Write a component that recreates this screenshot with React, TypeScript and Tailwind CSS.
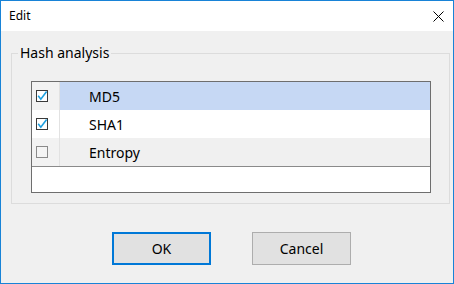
import React from "react";

const items = [
    { name: "MD5", checked: true, selected: true },
    { name: "SHA1", checked: true, selected: false },
    { name: "Entropy", checked: false, selected: false },
];

const CheckBox = ({ checked }: { checked: boolean }) => (
    <svg width="13" height="13" viewBox="0 0 13 13">
        <rect x="0.5" y="0.5" width="11" height="11" fill={checked ? "#ffffff" : "#f4f4f4"} stroke={checked ? "#3a3a3a" : "#8a8a8a"} />
        {checked && (
            <polyline points="2.2,5.8 4.8,9.2 10.6,1.6" fill="none" stroke="#1ea0e0" strokeWidth="1.6" />
        )}
    </svg>
);

const App = () => {
    return (
        <div
            className="w-[454px] h-[284px] flex flex-col border border-[#1883d7] bg-[#f0f0f0] text-black"
            style={{ fontFamily: '"Noto Sans", "DejaVu Sans", sans-serif' }}
        >
            {/* title bar */}
            <div className="h-[30px] bg-white flex items-center justify-between pl-[8px] pr-[9px]">
                <span className="text-[12px] leading-none">Edit</span>
                <svg width="11" height="11" viewBox="0 0 11 11">
                    <path d="M0.5 0.5 L10.5 10.5 M10.5 0.5 L0.5 10.5" stroke="#000" strokeWidth="1" />
                </svg>
            </div>

            <div className="flex flex-col">
                <fieldset className="mt-[13px] ml-[10px] mr-[3px] h-[160px] border border-[#dcdcdc] px-[6px] pb-[10px]">
                    <legend className="px-[2px] text-[14px] leading-[18px]">Hash analysis</legend>

                    <div className="mt-[19px] ml-[13px] mr-[12px] h-[112px] border border-[#6e6e6e] bg-white flex flex-col">
                        {items.map((item, i) => (
                            <div key={item.name} className={`h-[28px] flex flex-row ${i === 2 ? "h-[29px] border-b border-[#8a8a8a]" : ""}`}>
                                <div className={`w-[28px] flex items-center pl-[4px] border-r border-[#e2e2e2] ${i === 1 ? "bg-white" : "bg-[#f2f2f2]"}`}>
                                    <CheckBox checked={item.checked} />
                                </div>
                                <div
                                    className={`flex-1 flex items-center pl-[29px] text-[14px] ${
                                        item.selected ? "bg-[#c6d8f4]" : i === 1 ? "bg-white" : "bg-[#f0f0f0]"
                                    }`}
                                >
                                    {item.name}
                                </div>
                            </div>
                        ))}
                    </div>
                </fieldset>

                <div className="mt-[28px] ml-[111px] flex flex-row gap-[41px]">
                    <button className="w-[99px] h-[33px] border-2 border-[#0078d7] bg-[#e1e1e1] text-[14px]">OK</button>
                    <button className="w-[99px] h-[33px] border border-[#adadad] bg-[#e1e1e1] text-[14px]">Cancel</button>
                </div>
            </div>
        </div>
    );
};

export default App;
